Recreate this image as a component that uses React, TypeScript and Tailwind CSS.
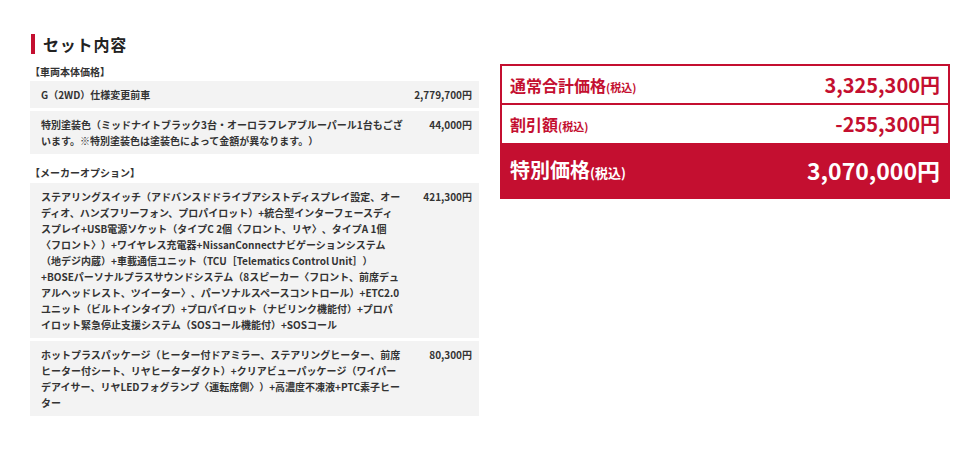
const font = { fontFamily: '"Noto Sans CJK JP", "Noto Sans", sans-serif' };

type Item = { name: string; price: string; wide?: boolean };

const bodyItems: Item[] = [
  { name: "G（2WD）仕様変更前車", price: "2,779,700円" },
  {
    name: "特別塗装色（ミッドナイトブラック3台・オーロラフレアブルーパール1台もございます。※特別塗装色は塗装色によって金額が異なります。）",
    price: "44,000円",
    wide: true,
  },
];

const optionItems: Item[] = [
  {
    name: "ステアリングスイッチ（アドバンスドドライブアシストディスプレイ設定、オーディオ、ハンズフリーフォン、プロパイロット）+統合型インターフェースディスプレイ+USB電源ソケット（タイプC 2個〈フロント、リヤ〉、タイプA 1個〈フロント〉）+ワイヤレス充電器+NissanConnectナビゲーションシステム（地デジ内蔵）+車載通信ユニット（TCU［Telematics Control Unit］）+BOSEパーソナルプラスサウンドシステム（8スピーカー〈フロント、前席デュアルヘッドレスト、ツイーター〉、パーソナルスペースコントロール）+ETC2.0ユニット（ビルトインタイプ）+プロパイロット（ナビリンク機能付）+プロパイロット緊急停止支援システム（SOSコール機能付）+SOSコール",
    price: "421,300円",
  },
  {
    name: "ホットプラスパッケージ（ヒーター付ドアミラー、ステアリングヒーター、前席ヒーター付シート、リヤヒーターダクト）+クリアビューパッケージ（ワイパーデアイサー、リヤLEDフォグランプ〈運転席側〉）+高濃度不凍液+PTC素子ヒーター",
    price: "80,300円",
  },
];

function ItemRow({ item }: { item: Item }) {
  return (
    <li className="flex justify-between bg-[#f3f3f3] pl-[11px] pr-[7px] pt-[6px] pb-[5px] text-[10px] font-bold leading-[16px] text-[#333]">
      <span className={item.wide ? "w-[364px]" : "w-[360px]"}>{item.name}</span>
      <span className="whitespace-nowrap">{item.price}</span>
    </li>
  );
}

export default function App() {
  return (
    <div
      className="flex min-h-[452px] items-start gap-[21px] bg-white px-[30px] pt-[34px] [text-spacing-trim:space-all]"
      style={font}
    >
      <section className="w-[449px]">
        <h2 className="flex h-[20px] items-center gap-[8px] pl-px">
          <span className="h-[20px] w-[4px] bg-[#c40f30]" />
          <span className="text-[16px] font-bold leading-none tracking-[0.05em] text-[#222]">セット内容</span>
        </h2>

        <p className="mt-[10px] mb-[1px] text-[10px] font-bold leading-[16px] text-[#333]">【車両本体価格】</p>
        <ul className="flex flex-col gap-[3px]">
          {bodyItems.map((item) => (
            <ItemRow key={item.name} item={item} />
          ))}
        </ul>

        <p className="mt-[11px] mb-[2px] text-[10px] font-bold leading-[16px] text-[#333]">【メーカーオプション】</p>
        <ul className="flex flex-col gap-[3px]">
          {optionItems.map((item) => (
            <ItemRow key={item.name} item={item} />
          ))}
        </ul>
      </section>

      <section className="mt-[30px] w-[450px] border-2 border-[#c40f30] text-[#c40f30]">
        <div className="flex h-[39px] items-center justify-between border-b-2 border-[#c40f30] px-[8px]">
          <span className="text-[16px] font-bold">
            通常合計価格<span className="text-[11px]">(税込)</span>
          </span>
          <span className="text-[20px] font-bold">3,325,300円</span>
        </div>
        <div className="flex h-[38px] items-center justify-between px-[8px]">
          <span className="text-[16px] font-bold">
            割引額<span className="text-[11px]">(税込)</span>
          </span>
          <span className="text-[20px] font-bold">-255,300円</span>
        </div>
        <div className="flex h-[54px] items-center justify-between bg-[#c40f30] px-[8px] text-white">
          <span className="text-[20px] font-bold">
            特別価格<span className="text-[13px]">(税込)</span>
          </span>
          <span className="text-[23px] font-bold">3,070,000円</span>
        </div>
      </section>
    </div>
  );
}
